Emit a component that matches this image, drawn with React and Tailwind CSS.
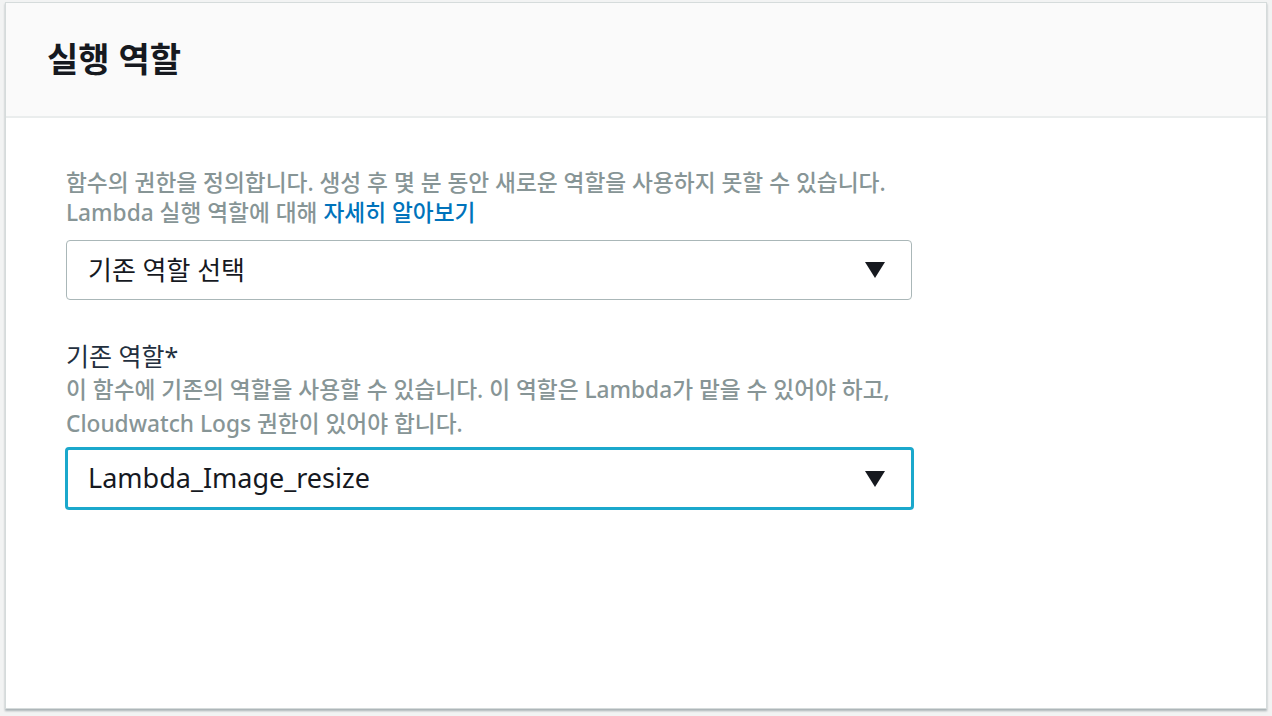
import React from "react";

const Caret = () => (
  <svg width="20" height="16" viewBox="0 0 20 16" className="shrink-0">
    <path d="M0 0 H20 L10 16 Z" fill="#16191f" />
  </svg>
);

const SelectBox = ({ value, focused }) => (
  <div
    className={`flex items-center justify-between rounded-[4px] bg-white pr-[26px] ${
      focused
        ? "h-[63px] w-[849px] border-[3px] border-[#1ba8cc] pl-[20px]"
        : "h-[60px] w-[846px] border border-[#aab7b8] pl-[21px]"
    }`}
  >
    <span className={`${focused ? "text-[27px]" : "text-[26px]"} text-[#16191f]`}>{value}</span>
    <Caret />
  </div>
);

const App = () => {
  return (
    <div
      className="h-[716px] w-[1272px] bg-[#f2f3f3] pl-[5px] pt-[2px]"
      style={{ fontFamily: '"Noto Sans", "Noto Sans CJK KR", sans-serif' }}
    >
      <div className="flex h-[707px] w-[1262px] flex-col border border-[#d5dbdb] bg-white shadow-[0_2px_2px_rgba(0,28,36,0.3)]">
        <div className="flex h-[115px] items-center border-b-2 border-[#eaeded] bg-[#fafafa] pl-[41px]">
          <h2 className="text-[34px] font-bold text-[#16191f]">실행 역할</h2>
        </div>

        <div className="pl-[60px] pt-[50px]">
          <p className="text-[22.7px] font-medium leading-[30px] text-[#879596]">
            함수의 권한을 정의합니다. 생성 후 몇 분 동안 새로운 역할을 사용하지 못할 수 있습니다.
            <br />
            Lambda 실행 역할에 대해{" "}
            <a className="text-[#0073bb]" href="#">
              자세히 알아보기
            </a>
          </p>

          <div className="mt-[12px]">
            <SelectBox value="기존 역할 선택" />
          </div>

          <div className="mt-[40px]">
            <div className="text-[25px] leading-[32px] text-[#232f3e]">기존 역할*</div>
            <p className="mt-[1px] text-[22.7px] font-medium leading-[34px] text-[#879596]">
              이 함수에 기존의 역할을 사용할 수 있습니다. 이 역할은 Lambda가 맡을 수 있어야 하고,
              <br />
              Cloudwatch Logs 권한이 있어야 합니다.
            </p>
          </div>

          <div className="ml-[-1px] mt-[6px]">
            <SelectBox value="Lambda_Image_resize" focused />
          </div>
        </div>
      </div>
    </div>
  );
};

export default App;
